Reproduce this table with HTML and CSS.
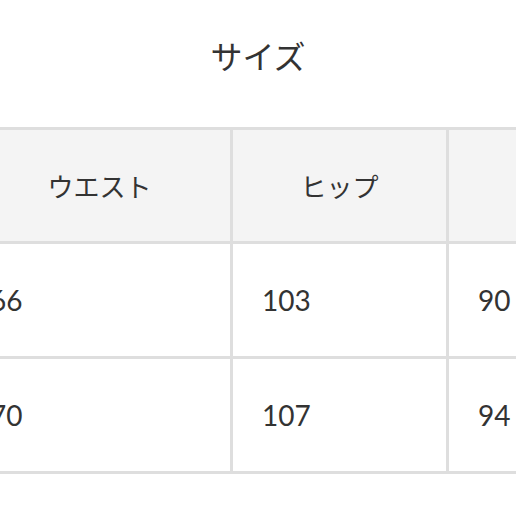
FILE: index.html
```html
<!DOCTYPE html>
<html lang="ja">
<head>
<meta charset="utf-8">
<link rel="stylesheet" href="styles.css">
</head>
<body>
<h2 class="title">サイズ</h2>
<div class="table-wrap">
  <div class="grid">
    <div class="cell head">ウエスト</div>
    <div class="cell head">ヒップ</div>
    <div class="cell head"></div>
    <div class="cell first">66</div>
    <div class="cell">103</div>
    <div class="cell">90</div>
    <div class="cell first">70</div>
    <div class="cell">107</div>
    <div class="cell">94</div>
  </div>
</div>
</body>
</html>
```
FILE: styles.css
```css
html, body {
  margin: 0;
  padding: 0;
  background: #fff;
}
body {
  width: 516px;
  height: 516px;
  overflow: hidden;
  font-family: Lato, "Noto Sans CJK JP", sans-serif;
  color: #333;
}
.title {
  margin: 0;
  padding-top: 35px;
  height: 92px;
  line-height: 40px;
  font-size: 32px;
  font-weight: normal;
  text-align: center;
  font-family: "Noto Sans CJK JP", sans-serif;
}
.table-wrap {
  width: 516px;
  overflow: hidden;
}
.grid {
  display: grid;
  grid-template-columns: 264px 216px 216px;
  grid-template-rows: 117px 115px 115px;
  margin-left: -31px;
  width: max-content;
}
.cell {
  box-sizing: border-box;
  border-right: 3px solid #dedede;
  border-bottom: 3px solid #dedede;
  display: flex;
  align-items: center;
  padding-left: 29px;
  font-size: 28px;
}
.cell.first {
  padding-left: 21px;
}
.head {
  border-top: 3px solid #dedede;
  background: #f4f4f4;
  justify-content: center;
  padding-left: 0;
  font-family: "Noto Sans CJK JP", sans-serif;
  font-size: 26px;
}
```
